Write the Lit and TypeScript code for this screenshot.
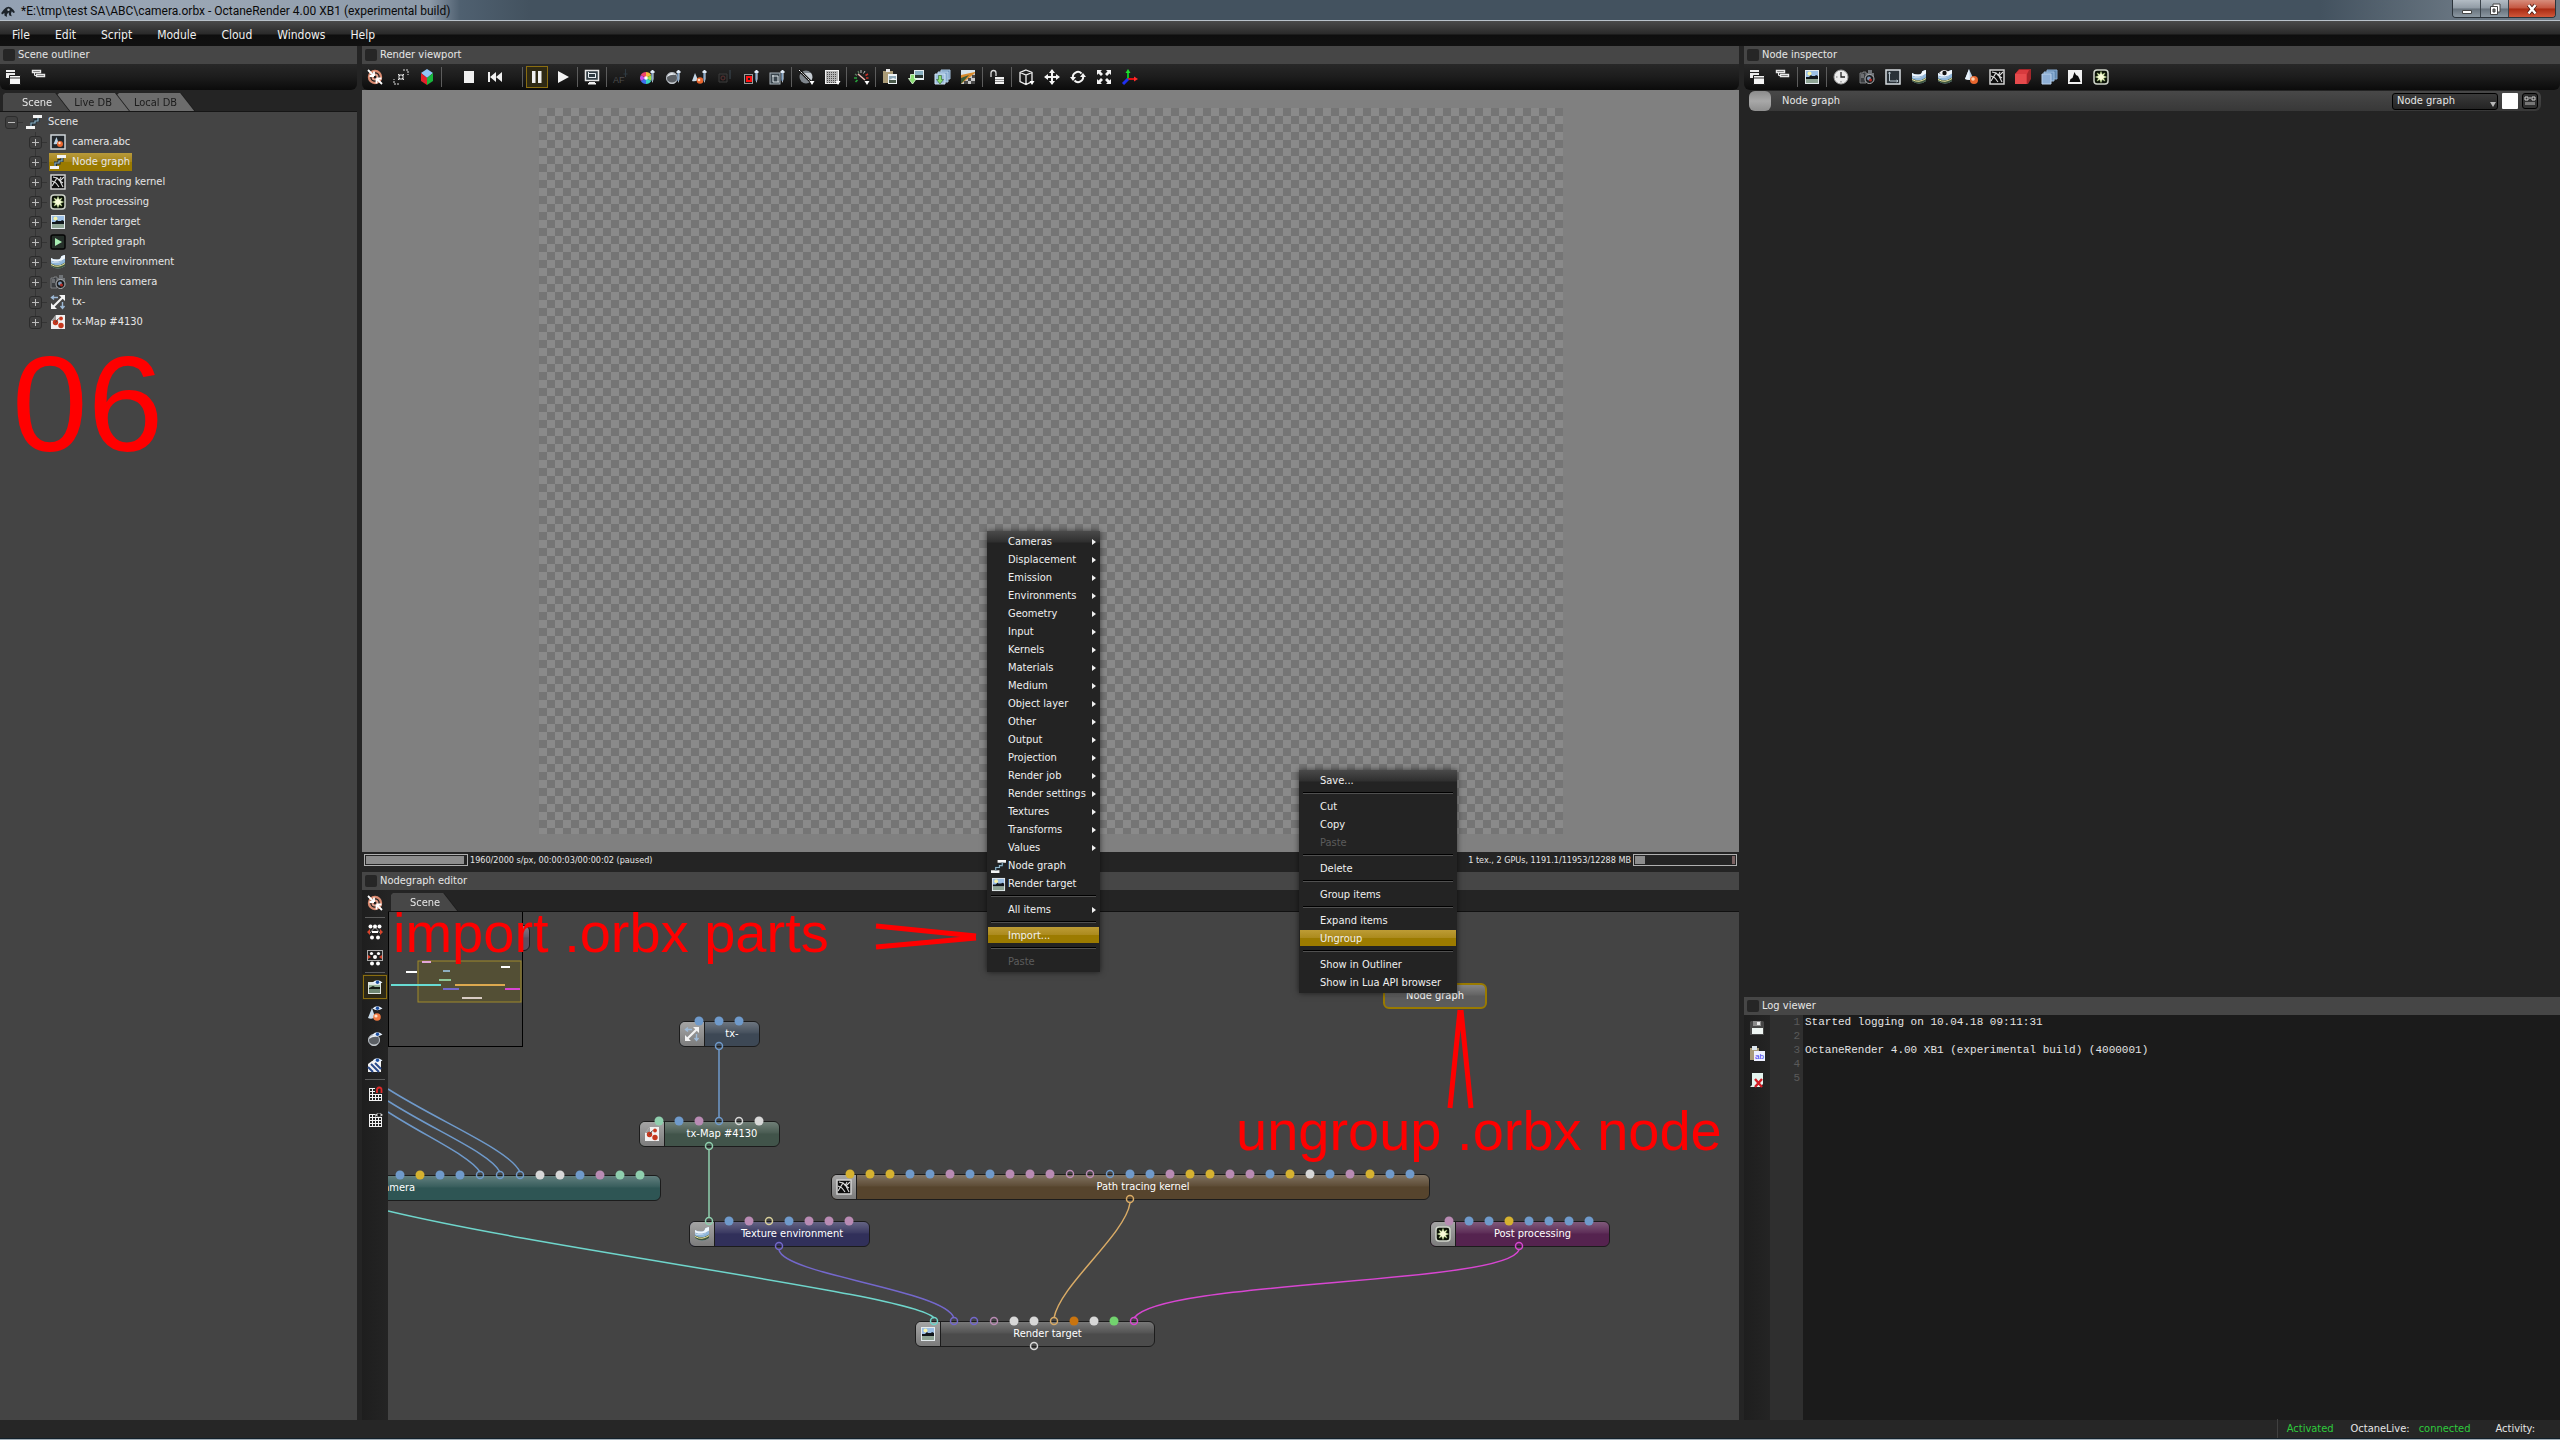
import { LitElement, html, svg, css, nothing, type TemplateResult } from "lit";
import { customElement, property } from "lit/decorators.js";
import { classMap } from "lit/directives/class-map.js";

const pencil = svg`<path d="M12.5 1h2v1h1v2h-1v6l-1 4-1-4V4h-1V2h1z" fill="#dfe9f5"/><path d="M13 4v8" stroke="#3f6d9c" stroke-width="1"/>`;
const dropMark = svg`<path d="M11.500 12h5l-2.500 4z" fill="#fff"/>`;
const eye = svg`<path d="M5.500 3.500Q10 -1 15.500 3.500Q10 7 5.500 3.500z" fill="#e8f2ff"/><circle cx="10.500" cy="3.200" r="1.700" fill="#1d4fa0"/>`;
const globe = svg`<path d="M1 4v8q7 5 14 0V1q-2 0-4 1.500Q11 5 8 5.500 4 6 1 4z" fill="#8fb6da"/><path d="M1 4q3 2 7 1.500Q11 5 11 2.500 13 1 15 1v4q-7 6-14 3z" fill="#f0f7fd"/><path d="M1 9.500q7 4 14-1v3.500q-7 5-14 0z" fill="#40573f"/><path d="M1 10.500q7 4 14-1" stroke="#efe6a0" fill="none"/><path d="M1 7q7 3 14-2" stroke="#7fa6cc" fill="none" stroke-width=".8"/>`;
const thumb = svg`<rect x="1" y="1" width="14" height="14" fill="#e4ebee"/><rect x="2" y="2" width="12" height="7" fill="#9cc0e6"/><circle cx="5.500" cy="4.500" r="2" fill="#f6f3a8"/><path d="M2 8h3l2-2 1 1h3l1-1 2 1v3H2z" fill="#10161c"/><rect x="2" y="10" width="12" height="4" fill="#8fa595"/>`;
const spheres = svg`<path d="M6 0l4 9q-3 3-8 1z" fill="#b9cfe2"/><path d="M6 0l1 11q-3 0-5-1z" fill="#e9f3fb"/><circle cx="11" cy="11" r="4" fill="#e8662e"/><circle cx="10" cy="10" r="1.800" fill="#ffd0b0"/>`;
const target = svg`<circle cx="8" cy="8" r="6" fill="none" stroke="#d98a70" stroke-width="2.400"/><circle cx="8" cy="8" r="2.500" fill="none" stroke="#e0a08c" stroke-width="2"/><path d="M1 1l6 6M7 7V2.500M7 7H2.500" stroke="#fff" stroke-width="1.800"/><path d="M15 15L9.500 9.500M9.500 9.500h5M9.500 9.500v5" stroke="#fff" stroke-width="1.800"/>`;
const sphere = svg`<circle cx="7" cy="9" r="6" fill="#5b5f64"/><circle cx="7" cy="9" r="5.500" fill="none" stroke="#b7bcc2"/><path d="M2 8q1-4 5-4 3 0 4 2-5-1-9 2z" fill="#e5e9ee"/><path d="M3 12q4 3 8 0-1 3-4 3t-4-3z" fill="#c3c8cd"/>`;
const camera = svg`<path d="M1 4h3V3h3v11H1z" fill="#3a3d40" stroke="#8d9093" stroke-width=".8"/><path d="M7 4h2V1h4v3h2v4H7z" fill="#707478"/><path d="M2 6h3M2 8h3" stroke="#a0a3a6"/><circle cx="10.500" cy="10" r="4.500" fill="#1a1c1e" stroke="#b4b7ba"/><circle cx="10" cy="9.500" r="2" fill="#7e96b4"/><circle cx="11.500" cy="11" r="1.500" fill="#b22a22"/>`;
const grid = svg`<path d="M2.500 2v13M5.500 2v13M8.500 2v13M11.500 2v13M14.500 2v13M2 2.500h13M2 5.500h13M2 8.500h13M2 11.500h13M2 14.500h13" stroke="#f2f2f2" fill="none"/>`;

const ICONS: Record<string, TemplateResult> = {
  windows: svg`<path d="M1 1h9v8H1z" fill="#ececec"/><path d="M1 3h9v1H1z" fill="#222"/><path d="M4.500 6.500h11v9h-11z" fill="#f4f4f4" stroke="#1a1a1a"/><path d="M5 9h10" stroke="#333"/>`,
  bars: svg`<path d="M1.500 1.500h8v2h-8zM5.500 5.500h8v2h-8z" fill="none" stroke="#e8e8e8" stroke-width="1.400"/><path d="M3.500 3.500v3h2" fill="none" stroke="#e8e8e8"/>`,
  graph: svg`<path d="M7 1h9v3H7zM0 12h9v3H0z" fill="#f4f4f4"/><path d="M12 4v2.500H9V9H5.500v3" fill="none" stroke="#1d2c36" stroke-width="3"/><path d="M12 4v3H9v2H5v3" fill="none" stroke="#8fb3c6" stroke-width="1.200"/>`,
  abc: svg`<rect x="1" y="1" width="14" height="14" fill="#22272c" stroke="#cfd6da" stroke-width="1.500"/><path d="M6.500 3l2 6q-2 2-5 1z" fill="#bcd3e6"/><circle cx="10" cy="10" r="3" fill="#e8662e"/><circle cx="9.500" cy="9" r="1.200" fill="#ffd9bd"/>`,
  kernel: svg`<rect x="1" y="1" width="14" height="14" fill="#0c0c0c" stroke="#d2d2d2" stroke-width="1.500"/><path d="M2 12l5-8 3 3 4-4M7 4L3 3M10 7l3 6M6 9l3 4M2 7l4 2M11 3l-2 4M13 9l-3-2" stroke="#dcdcdc" stroke-width="1.100" fill="none"/>`,
  post: svg`<rect x="1" y="1" width="14" height="14" rx="3" fill="#0b1206" stroke="#cfd4ca" stroke-width="1.500"/><path d="M8 2.500l1.200 3L12 4l-1.500 2.800 3 1.200-3 1.200L12 12l-2.800-1.500L8 13.500l-1.200-3L4 12l1.500-2.800-3-1.200 3-1.200L4 4l2.800 1.500z" fill="#f8fbd8" stroke="#b9d98a" stroke-width=".5"/>`,
  image: thumb,
  script: svg`<rect x="1" y="1" width="14" height="14" rx="2" fill="#26302a" stroke="#050505" stroke-width="1.500"/><path d="M5 4l7 4-7 4z" fill="#a9efb4"/>`,
  globe,
  globeEye: svg`${globe}<path d="M2 4Q7 -2 13 4Q7 8 2 4z" fill="#f5f5f5"/><circle cx="7.500" cy="4" r="2.200" fill="#111"/>`,
  camera,
  transform: svg`<path d="M3 13L13 3" stroke="#f3f3f3" stroke-width="2.200" fill="none"/><path d="M15 1v6l-6-6zM1 15V9l6 6z" fill="#f3f3f3"/><path d="M2 3.500h6M4 1.500l-2.500 2L4 5.500M12.500 8v6M10.500 12l2 2.500 2-2.500" stroke="#9db9d6" stroke-width="1.400" fill="none"/>`,
  texmap: svg`<path d="M6 1h9v14H1V7z" fill="#f2f2f2"/><path d="M6 1v6H1z" fill="#9c9c9c"/><circle cx="11" cy="4.500" r="1.900" fill="#c6381e"/><circle cx="5.500" cy="8.500" r="2.700" fill="#c6381e"/><path d="M5.500 8.500l3-4" stroke="#444"/><circle cx="11" cy="11.500" r="2.700" fill="#c6381e"/>`,
  target,
  expand: svg`<path d="M10 1h5v5M6 15H1v-5" fill="none" stroke="#ddd" stroke-dasharray="2 1"/><path d="M5 5l2 2M11 5L9 7M5 11l2-2M11 11L9 9M5 7h2V5M11 7H9V5M5 9h2v2M11 9H9v2" stroke="#e8e8e8" fill="none"/>`,
  cube: svg`<path d="M8 0l6 4-6 5-6-5z" fill="#8fc3f5"/><path d="M2 4l6 5v7l-6-4z" fill="#e3202a"/><path d="M14 4L8 9v7l6-4z" fill="#18b63c"/>`,
  stop: svg`<rect x="3" y="2" width="10" height="12" fill="#f0f0f0"/>`,
  rewind: svg`<path d="M1 3h2v10H1zM9 3v10L3 8zM15 3v10L9 8z" fill="#f0f0f0"/>`,
  pause: svg`<path d="M3 2h3.500v12H3zM9 2h3.500v12H9z" fill="#f0f0f0"/>`,
  play: svg`<path d="M3 2l11 6-11 6z" fill="#f4f4f4"/>`,
  monitor: svg`<rect x="1.500" y="1.500" width="13" height="10" fill="#2f3b42" stroke="#e6e6e6" stroke-width="1.500"/><path d="M4 4.500h7.500v4M4.500 3v5.500H12" stroke="#e8eef2" fill="none"/><path d="M5 13h6v1h1v1.500H4V14h1z" fill="#f0f0f0"/>`,
  af: svg`<text x="0" y="14" font-size="9" fill="#4c4c4c">AF</text><path d="M12.500 0v8M10.500 5h4" stroke="#2f3a42"/>`,
  wheel: svg`<path d="M7 9V3a6 6 0 0 1 5.200 3z" fill="#f5b93c"/><path d="M7 9l5.200-3a6 6 0 0 1 0 6z" fill="#9be34a"/><path d="M7 9l5.200 3A6 6 0 0 1 7 15z" fill="#39d6c4"/><path d="M7 9v6a6 6 0 0 1-5.200-3z" fill="#3f6ff0"/><path d="M7 9l-5.200 3a6 6 0 0 1 0-6z" fill="#c552ea"/><path d="M7 9L1.800 6A6 6 0 0 1 7 3z" fill="#f0456a"/><circle cx="7" cy="9" r="1.800" fill="#fff"/>${pencil}`,
  pickSphere: svg`${sphere}${pencil}`,
  pickMat: svg`<path d="M4 4l3 7q-3 2-6 1z" fill="#c3d6e6"/><circle cx="9" cy="11.500" r="3.300" fill="#e8662e"/><circle cx="8" cy="11" r="1.300" fill="#ffd9bd"/>${pencil}`,
  pickDim: svg`<path d="M2 5h8v8H2z" fill="none" stroke="#3d3d3d"/><circle cx="6" cy="9" r="2" fill="none" stroke="#5a3030"/><path d="M13 1v9" stroke="#3c4a55"/>`,
  pickRed: svg`<rect x="1.500" y="5.500" width="8" height="9" fill="#1a1a1a" stroke="#9a9a9a"/><rect x="4" y="8" width="4" height="4" fill="none" stroke="#ff1010" stroke-width="2"/>${pencil}`,
  pickFrame: svg`<rect x="1" y="4" width="10" height="11" fill="#39444c" stroke="#aab4bb"/><path d="M4 6v7h6M3 7h6v6" stroke="#dfe6ea" fill="none"/>${pencil}`,
  split: svg`<circle cx="8" cy="8" r="6.500" fill="#7f868d"/><path d="M3 4l9 9A6.500 6.500 0 0 0 13 4z" fill="#c6ccd2"/><path d="M1 1l14 14" stroke="#111" stroke-width="2.500"/><path d="M1 1l13 13" stroke="#fff" stroke-dasharray="2 1"/>${dropMark}`,
  dither: svg`<rect x="1.500" y="1.500" width="13" height="13" fill="#b5b5b5" stroke="#f2f2f2"/><path d="M3 3.500h10M3 5.500h10M3 7.500h10M3 9.500h10M3 11.500h10M3 13.500h10" stroke="#4d4d4d" stroke-dasharray="1 1"/>${dropMark}`,
  gauge: svg`<path d="M2.500 13l2-2M1 9h3" stroke="#28a33c" stroke-width="1.600"/><path d="M2 5l2 1.500M5 2l1 2.500" stroke="#5f7f63" stroke-width="1.200"/><path d="M8 1v3M12 2l-1.500 2.500" stroke="#bdbdbd"/><path d="M15 5l-2.500 1.500M15.500 9H13" stroke="#c83028" stroke-width="1.600"/><path d="M5 5l7 6" stroke="#f3b9b4" stroke-width="1.600"/>${dropMark}`,
  paste: svg`<path d="M1 2h10v12H1z" fill="#ab9c77"/><path d="M4 0h4v3H4z" fill="#e9e9e9"/><path d="M6 5h9v10H6z" fill="#eef3f5"/><path d="M7 7h7v3l-3-1-4 2z" fill="#8fa9b8"/><path d="M7 11h7v3H7z" fill="#4b5a4b"/>`,
  saveImg: svg`<rect x="6" y="1" width="10" height="10" fill="#e4ebee"/><path d="M7 2h8v4H7z" fill="#86aec0"/><path d="M7 6h8v3H7z" fill="#27342f"/><path d="M2.500 5.500h4v4h2l-4 5.500-4-5.500h2z" fill="#8ade72" stroke="#e3ffe0" stroke-width=".8"/>`,
  saveLayers: svg`<path d="M7 1h9v9H7z" fill="#6e94bb" stroke="#a9c5e0"/><path d="M4 3h10v10H4z" fill="#86abd0" stroke="#b9d2e9"/><path d="M1 5h10v10H1z" fill="#9fbfe0" stroke="#d0e2f3"/><path d="M4.500 6.500h3v4h2L6 15l-3.500-4.500h2z" fill="#8ade72" stroke="#2c5a2c" stroke-width=".6"/>`,
  alpha: svg`<rect x="1" y="1" width="14" height="14" fill="#d8e3ea"/><path d="M1 6l14-3v4L1 15z" fill="#d98a2b"/><path d="M1 9l8-3-8 9z" fill="#3d5a35"/><path d="M1 15L15 4v11z" fill="#c9c9c9"/><path d="M8 9h3v3H8zM11 12h4v3h-4zM12 6h3v3h-3zM4 12h4v3H4z" fill="#4a4a4a"/>`,
  unlock: svg`<path d="M2 8V4q0-2.500 2.500-2.500T7 4v3" fill="none" stroke="#d9d9d9" stroke-width="1.300"/><path d="M6 8h9v7H6z" fill="#f0f0f0"/><path d="M6 10.500h9M6 12.500h9" stroke="#8e8e8e"/>`,
  wireCube: svg`<path d="M8 1l6 2.500v9L8 15.500l-6-3v-9zM2 3.500L8 6l6-2.500M8 6v9" fill="none" stroke="#f0f0f0" stroke-width="1.300"/>${dropMark}`,
  move: svg`<path d="M8 1v14M1 8h14" stroke="#f4f4f4" stroke-width="2"/><path d="M8 0l3 4H5zM8 16l3-4H5zM0 8l4-3v6zM16 8l-4-3v6z" fill="#f4f4f4"/>`,
  rotate: svg`<path d="M3 9a5 5 0 0 1 8.500-4.500M13 7a5 5 0 0 1-8.500 4.500" fill="none" stroke="#f4f4f4" stroke-width="2"/><path d="M0 8h6l-3 4zM10 8h6l-3-4z" fill="#f4f4f4"/>`,
  fit: svg`<path d="M1 1h5L4.500 2.500 7 5 5 7 2.500 4.500 1 6zM15 1v5l-1.500-1.500L11 7 9 5l2.500-2.500L10 1zM1 15v-5l1.500 1.500L5 9l2 2-2.500 2.500L6 15zM15 15h-5l1.500-1.500L9 11l2-2 2.500 2.500L15 10z" fill="#f4f4f4"/>`,
  axes: svg`<path d="M6 10V3" stroke="#10c020" stroke-width="2"/><path d="M6 0l2.500 4h-5z" fill="#20e030"/><path d="M6 10h7" stroke="#e01010" stroke-width="2"/><path d="M16 10l-4-2.500v5z" fill="#ff2a2a"/><path d="M6 10l-5 5" stroke="#2030f0" stroke-width="3"/>`,
  clock: svg`<circle cx="8" cy="8" r="7" fill="#ececec" stroke="#9b9b9b"/><path d="M8 3v5h4" fill="none" stroke="#222" stroke-width="1.300"/><path d="M8 12v1.500M3 8h1.500" stroke="#777"/>`,
  axisBox: svg`<rect x="1" y="1" width="14" height="14" fill="#2a3238" stroke="#d6dce0" stroke-width="1.500"/><path d="M4.500 3v9H13M3.500 4.500l1-1.500 1 1.500M11.500 11l1.500 1-1.500 1" stroke="#b9c6cf" fill="none"/>`,
  spheres,
  redLayers: svg`<path d="M4 0h12v10l-3 5H0V5z" fill="#a3262a"/><path d="M0 5l4-4h10l-2 4v10H0z" fill="#d83a3e"/><path d="M0 5h11v10H0z" fill="#e64a4c"/>`,
  blueLayers: svg`<path d="M6 1h10v9H6z" fill="#5f86ae" stroke="#89abd0"/><path d="M3 3h10v9H3z" fill="#7299c2" stroke="#9dbcdc"/><path d="M1 5h9v10H1z" fill="#8fb0d6" stroke="#b9d0ea"/>`,
  histogram: svg`<rect x="1" y="1" width="14" height="14" fill="#f0f0f0"/><path d="M2.500 13l1-3 2-1 2-6 1.500 3 2 1 1.500 3 1 3z" fill="#0a0a0a"/>`,
  nodesSpread: svg`<path d="M8 3L3 9M8 3l5 6" stroke="#999"/><circle cx="3.500" cy="2.500" r="2" fill="#fff"/><circle cx="8" cy="2.500" r="2" fill="#fff"/><circle cx="12.500" cy="2.500" r="2" fill="#fff"/><path d="M3 5v6L0 8zM13 5v6l3-3z" fill="#d9442c"/><path d="M5 7h6v2H5z" fill="#fff"/><circle cx="5" cy="13.500" r="2" fill="#fff"/><circle cx="11" cy="13.500" r="2" fill="#fff"/>`,
  nodesBox: svg`<rect x=".5" y=".5" width="15" height="10" fill="none" stroke="#aaa"/><circle cx="4.500" cy="3.500" r="1.600" fill="#fff"/><circle cx="11.500" cy="3.500" r="1.600" fill="#fff"/><circle cx="8" cy="7" r="2" fill="#fff"/><path d="M1 5l3 2-3 2zM15 5l-3 2 3 2z" fill="#d9442c"/><circle cx="5" cy="13.500" r="2" fill="#fff"/><circle cx="11" cy="13.500" r="2" fill="#fff"/>`,
  imageEye: svg`<rect x="1" y="3" width="13" height="12" fill="#dfe6e4"/><path d="M2 6h11v4H2z" fill="#96b39b"/><path d="M2 9l4-2 2 1h5v2H2z" fill="#141a14"/><path d="M2 10h11v4H2z" fill="#6f8773"/>${eye}`,
  spheresEye: svg`<path d="M5 3l3 9q-3 3-7 1z" fill="#c8dbe9"/><circle cx="10" cy="12" r="3.800" fill="#ef7a42"/><circle cx="9" cy="11" r="1.600" fill="#ffe0c8"/>${eye}`,
  sphereEye: svg`${sphere}${eye}`,
  stripesEye: svg`<path d="M1 7l4-3h9v11H1z" fill="#f2f2f2"/><path d="M4 7l8 8M8 6l6 6M1 10l5 5" stroke="#2b4a8a" stroke-width="2"/>${eye}`,
  gridMagnet: svg`${grid}<path d="M8 0h8v8H8z" fill="#242424"/><path d="M10 7V4q0-2.500 2.300-2.500T14.500 4v3" fill="none" stroke="#e02a2a" stroke-width="1.800"/>`,
  gridEye: svg`${grid}<path d="M8.500 0h7v5h-7z" fill="#242424"/><path d="M8 3Q12 -1 16 3Q12 6 8 3z" fill="#ddd"/><circle cx="12" cy="3" r="1.700" fill="#111"/>`,
  floppy: svg`<path d="M2 1h12l1 1v13H1V2z" fill="#474747"/><rect x="4" y="1" width="8" height="5" fill="#8a8a8a"/><rect x="8" y="2" width="3" height="3" fill="#e8e8e8"/><rect x="3" y="8" width="11" height="6" fill="#eef5f2"/>`,
  copyText: svg`<path d="M1 2h9v12H1z" fill="#a89a78"/><rect x="3" y="0" width="5" height="4" fill="#dce6ee"/><rect x="5" y="5" width="11" height="10" fill="#eef0ff"/><text x="6" y="13" font-size="8" fill="#3a3af0">ab</text>`,
  clearLog: svg`<path d="M3 1h11v11l-3 3H1l2-2z" fill="#e3f3ee"/><path d="M6 7l7 8M13 7l-7 8" stroke="#d01c24" stroke-width="2.400"/>`,
};

const icon = (name: string) =>
  html`<svg class="icon" viewBox="0 0 16 16" aria-hidden="true">${ICONS[name]}</svg>`;

type Tool = { icon: string; label: string; on?: boolean } | "|" | " ";

const tool = (i: string, label: string, on = false): Tool => ({ icon: i, label, on });

const renderTools = (tools: Tool[]) =>
  tools.map((t) =>
    t === "|"
      ? html`<span class="sep"></span>`
      : t === " "
        ? html`<span class="space"></span>`
        : html`<button class=${classMap({ tool: true, on: !!t.on })} aria-label=${t.label}>${icon(t.icon)}</button>`
  );

const OUTLINER_TOOLS: Tool[] = [tool("windows", "Expand all"), tool("bars", "Collapse all")];

const VIEWPORT_TOOLS: Tool[] = [
  tool("target", "Recenter view"), tool("expand", "Reset view"), tool("cube", "Display mode"), "|", " ",
  tool("stop", "Stop"), tool("rewind", "Restart"), " ", "|",
  tool("pause", "Pause", true), tool("play", "Render"), "|",
  tool("monitor", "Real time"), "|",
  tool("af", "Auto focus picker"), tool("wheel", "White balance picker"), tool("pickSphere", "Material picker"),
  tool("pickMat", "Object picker"), tool("pickDim", "Camera target picker"), tool("pickRed", "Render region"),
  tool("pickFrame", "Film region"), "|",
  tool("split", "Clay mode"), tool("dither", "Subsampling"), "|",
  tool("gauge", "Render priority"), "|",
  tool("paste", "Copy image"), tool("saveImg", "Save image"), tool("saveLayers", "Save passes"), tool("alpha", "Background image"), "|",
  tool("unlock", "Lock resolution"), "|",
  tool("wireCube", "Camera views"), tool("move", "Move"), tool("rotate", "Rotate"), tool("fit", "Scale"), tool("axes", "World axes"),
];

const INSPECTOR_TOOLS: Tool[] = [
  tool("windows", "Expand all"), tool("bars", "Collapse all"), "|",
  tool("image", "Render target"), "|",
  tool("clock", "Animation"), tool("camera", "Camera"), tool("axisBox", "Resolution"), tool("globe", "Environment"),
  tool("globeEye", "Visible environment"), tool("spheres", "Geometry"), tool("kernel", "Kernel"), tool("redLayers", "Render layer"),
  tool("blueLayers", "Render passes"), tool("histogram", "Imager"), tool("post", "Post processing"),
];

const GRAPH_TOOLS: Tool[] = [
  tool("target", "Recenter graph"), "|", tool("nodesSpread", "Unfold items"), tool("nodesBox", "Unfold groups"), "|",
  tool("imageEye", "Render target preview", true), tool("spheresEye", "Mesh preview"), tool("sphereEye", "Material preview"),
  tool("stripesEye", "Texture preview"), "|", tool("gridMagnet", "Snap to grid"), tool("gridEye", "Show grid"),
];

const LOG_TOOLS: Tool[] = [tool("floppy", "Save log"), tool("copyText", "Copy log"), tool("clearLog", "Clear log")];

const TREE = [
  ["abc", "camera.abc"], ["graph", "Node graph"], ["kernel", "Path tracing kernel"], ["post", "Post processing"],
  ["image", "Render target"], ["script", "Scripted graph"], ["globe", "Texture environment"],
  ["camera", "Thin lens camera"], ["transform", "tx-"], ["texmap", "tx-Map #4130"],
];

interface MenuEntry { label: string; sub?: boolean; icon?: string; active?: boolean; off?: boolean }

const CREATE_MENU: (MenuEntry | null)[] = [
  ...["Cameras", "Displacement", "Emission", "Environments", "Geometry", "Input", "Kernels", "Materials", "Medium",
    "Object layer", "Other", "Output", "Projection", "Render job", "Render settings", "Textures", "Transforms", "Values",
  ].map((label) => ({ label, sub: true })),
  { label: "Node graph", icon: "graph" }, { label: "Render target", icon: "image" }, null,
  { label: "All items", sub: true }, null, { label: "Import...", active: true }, null, { label: "Paste", off: true },
];

const NODE_MENU: (MenuEntry | null)[] = [
  { label: "Save..." }, null, { label: "Cut" }, { label: "Copy" }, { label: "Paste", off: true }, null,
  { label: "Delete" }, null, { label: "Group items" }, null, { label: "Expand items" }, { label: "Ungroup", active: true },
  null, { label: "Show in Outliner" }, { label: "Show in Lua API browser" },
];

const PIN: Record<string, string> = {
  y: "#d6b22f", b: "#6f9acb", p: "#b98bb4", w: "#d8d8d8", g: "#8fcfae", t: "#6fd6cc", v: "#7468cc",
  o: "#d9ab66", d: "#c9740f", n: "#72d36e", m: "#d846d2", c: "#d8cf9a",
};

interface GraphNode {
  x: number; y: number; w: number; label: string; icon?: string; tone: string;
  pins: string; start: number; out?: [number, string];
}

// Coordinates are canvas units; an upper-case pin code marks a connected (hollow) pin.
const NODES: GraphNode[] = [
  { x: 291, y: 109, w: 81, label: "tx-", icon: "transform", tone: "slate", pins: "bbb", start: 311, out: [331, "b"] },
  { x: 251, y: 209, w: 141, label: "tx-Map #4130", icon: "texmap", tone: "green", pins: "gbpBWw", start: 271, out: [321, "g"] },
  { x: -304, y: 263, w: 577, label: "Thin lens camera", tone: "teal", pins: "bybbBBBwwbpgg", start: 12 },
  { x: 301, y: 309, w: 181, label: "Texture environment", icon: "globe", tone: "navy", pins: "GbpCbppp", start: 321, out: [391, "v"] },
  { x: 443, y: 262, w: 599, label: "Path tracing kernel", icon: "kernel", tone: "brown", pins: "yyybbpbbpppPPBbbpyyppbywbpybb", start: 462, out: [742, "o"] },
  { x: 1042, y: 309, w: 180, label: "Post processing", icon: "post", tone: "purple", pins: "pbbybbbb", start: 1061, out: [1131, "m"] },
  { x: 527, y: 409, w: 240, label: "Render target", icon: "image", tone: "gray", pins: "TVVPwwOdwnM", start: 546, out: [646, "w"] },
  { x: 995, y: 71, w: 104, label: "Node graph", tone: "picked", pins: "", start: 0 },
  { x: 30, y: 13, w: 112, label: "", tone: "mauve", pins: "", start: 0 },
];

const WIRES: [string, string][] = [
  ["b", "M331 138V205"], ["g", "M321 238V305"],
  ["b", "M0 177C52 210 122 238 132 260"], ["b", "M0 189C47 219 102 241 112 260"], ["b", "M0 200C37 224 82 244 92 260"],
  ["t", "M0 299C172 340 527 383 546 406"], ["v", "M391 338C397 363 557 378 566 406"],
  ["o", "M742 291C737 323 672 373 666 406"], ["m", "M1131 338C1117 373 772 368 746 406"],
];

const MINIMAP: [number, number, number, string][] = [
  [34, 50, 9, "#e3a6d8"], [18, 60, 11, "#ffffff"], [55, 59, 7, "#8faec0"], [113, 55, 9, "#ffffff"], [51, 68, 12, "#8fc79a"],
  [3, 73, 50, "#68dcd4"], [67, 73, 50, "#dca94f"], [55, 77, 16, "#7468cc"], [117, 77, 15, "#d846d2"], [74, 86, 20, "#d8ccc4"],
];

const shared = css`
  button, select { font: inherit; color: inherit; margin: 0; padding: 0; border: 0; background: none; }
  .icon { width: 16px; height: 16px; flex: none; display: block; overflow: visible; font-family: "Liberation Sans", sans-serif; }
`;

@customElement("context-menu")
export class ContextMenu extends LitElement {
  @property({ attribute: false }) entries: (MenuEntry | null)[] = [];

  static styles = [shared, css`
    :host { display: block; color: #f0f0f0; box-shadow: 0 0 6px rgba(0, 0, 0, 0.6); }
    .menu {
      list-style: none; margin: 0; padding: 1px 1px 2px;
      background: linear-gradient(#4a4a4a, #2f2f2f 11px, #232323 12px);
    }
    .item { display: flex; align-items: center; box-sizing: border-box; width: 100%; height: 18px; text-align: left; padding: 2px 3px 0 20px; white-space: nowrap; }
    .icon { width: 15px; height: 15px; margin: 0 2px 0 -17px; }
    .label { flex: 1; }
    .active { background: linear-gradient(#bd9c35, #ab8a1d 50%, #9c7b00 52%) 0 1px / 100% 16px no-repeat; }
    .off { color: #5c5c5c; }
    .arrow { border: 3px solid transparent; border-left: 4px solid #f0f0f0; border-right: 0; }
    .rule { height: 1px; margin: 3px 3px; background: #000; border-bottom: 1px solid #505050; }
  `];

  render() {
    return html`<ul class="menu" role="menu">
      ${this.entries.map((e) => e === null
        ? html`<li class="rule" role="separator"></li>`
        : html`<li role="none"><button role="menuitem" ?disabled=${e.off}
            class=${classMap({ item: true, active: !!e.active, off: !!e.off })}>
            ${e.icon ? icon(e.icon) : nothing}<span class="label">${e.label}</span>
            ${e.sub ? html`<span class="arrow"></span>` : nothing}</button></li>`)}
    </ul>`;
  }
}

@customElement("node-canvas")
export class NodeCanvas extends LitElement {
  static styles = [shared, css`
    :host { display: block; position: relative; overflow: hidden; background: #444; border-top: 1px solid #111; box-sizing: border-box; color: #fff; }
    .node {
      position: absolute; box-sizing: border-box; height: 26px; display: flex; align-items: stretch;
      border: 1px solid #1c1c1c; border-radius: 6px; overflow: hidden;
      background: linear-gradient(rgba(255, 255, 255, 0.25), rgba(255, 255, 255, 0.05) 45%, rgba(255, 255, 255, 0) 50%), var(--tone);
    }
    .badge { flex: none; width: 25px; display: grid; place-items: center; background: linear-gradient(#a5a5a5, #7c7c7c); border-right: 1px solid #1c1c1c; box-sizing: border-box; }
    .name { flex: 1; text-align: center; line-height: 24px; white-space: nowrap; }
    .slate { --tone: #3d4855; } .green { --tone: #41544a; } .teal { --tone: #2e5554; } .navy { --tone: #31305a; }
    .brown { --tone: #56442d; } .purple { --tone: #55234f; } .gray { --tone: #4b4b4b; } .mauve { --tone: #5f4f60; }
    .picked { --tone: #5c5c5c; border: 2px solid #997a00; }
    .picked .name { line-height: 22px; }
    .wires { position: absolute; inset: 0; width: 100%; height: 100%; }
    .map { position: absolute; top: 0; left: 0; width: 133px; height: 134px; border: 1px solid #000; border-top: 0; background: #444; }
    .map svg { display: block; width: 100%; height: 100%; overflow: visible; }
  `];

  private node(n: GraphNode) {
    return html`<div class="node ${n.tone}" style="left:${n.x}px;top:${n.y}px;width:${n.w}px">
      ${n.icon ? html`<span class="badge">${icon(n.icon)}</span>` : nothing}<span class="name">${n.label}</span></div>`;
  }

  private pin(x: number, y: number, code: string, hollow: boolean) {
    const color = PIN[code.toLowerCase()];
    return hollow
      ? svg`<circle cx=${x} cy=${y} r="3.500" fill="none" stroke=${color} stroke-width="1.500"/>`
      : svg`<circle cx=${x} cy=${y} r="4.500" fill=${color}/>`;
  }

  render() {
    return html`
      ${NODES.map((n) => this.node(n))}
      <svg class="wires" aria-hidden="true">
        ${WIRES.map(([c, d]) => svg`<path d=${d} fill="none" stroke=${PIN[c]} stroke-width="1.500"/>`)}
        ${NODES.map((n) => [...n.pins].map((c, i) => this.pin(n.start + i * 20, n.y, c, c < "a")))}
        ${NODES.map((n) => (n.out ? this.pin(n.out[0], n.y + 25, n.out[1], true) : nothing))}
      </svg>
      <div class="map"><svg aria-hidden="true">
        <rect x="29" y="49" width="103" height="41" fill="rgba(120,105,20,.3)" stroke="#a08a2a"/>
        ${MINIMAP.map(([x, y, w, c]) => svg`<rect x=${x - 1} y=${y - 1} width=${w} height="2" fill=${c}/>`)}
      </svg></div>`;
  }
}

@customElement("app-root")
export class AppRoot extends LitElement {
  static styles = [shared, css`
    :host {
      display: flex; flex-direction: column; position: relative; min-height: 100vh; overflow: hidden;
      background: #242424; color: #e6e6e6;
      font-family: "DejaVu Sans Condensed", "Noto Sans", sans-serif; font-size: 11px; line-height: 14px;
    }
    .titlebar {
      display: flex; align-items: center; height: 20px; gap: 6px; padding-left: 2px; border-bottom: 1px solid #b9c2ca; color: #0a0a0a;
      background: linear-gradient(90deg, #93a1b3, #9aa6b4 220px, #8c99a8 430px, #4f6070 460px, #43525f 530px, #43525f calc(100% - 240px), #66737f calc(100% - 110px), #6d7a86);
      font-family: Roboto, "Noto Sans", sans-serif; font-size: 12px;
    }
    .titlebar .icon { width: 13px; height: 13px; }
    .title { flex: 1; margin: 0; padding-top: 2px; font: inherit; white-space: nowrap; }
    .window-buttons { align-self: flex-start; display: flex; margin-right: 4px; border: 1px solid #2b333a; border-top: 0; border-radius: 0 0 4px 4px; overflow: hidden; }
    .wb { width: 28px; height: 17px; display: grid; place-items: center; background: linear-gradient(#b3bcc4, #8f9aa4 48%, #66717b 52%, #8c98a2); border-right: 1px solid #3a434b; }
    .wb.close { width: 46px; background: linear-gradient(#d78d7c, #c4553f 48%, #a92a12 52%, #d0573a); border-right: 0; }
    .wb svg { width: 12px; height: 12px; }
    .menubar { display: flex; gap: 1px; height: 25px; background: linear-gradient(#4a4a4a, #2a2a2a 13px, #0e0e0e 14px, #111); font-size: 12px; color: #f0f0f0; }
    .menubar button { padding: 3px 12px 0; }
    .workspace { flex: 1; min-height: 0; display: grid; grid-template-columns: minmax(0, 357fr) minmax(0, 1377fr) minmax(0, 816fr); gap: 5px; }
    .column { display: grid; min-height: 0; min-width: 0; }
    .middle { grid-template-rows: minmax(0, 826fr) minmax(0, 548fr); }
    .right { grid-template-rows: minmax(0, 951fr) minmax(0, 423fr); }
    .panel { display: flex; flex-direction: column; min-height: 0; min-width: 0; }
    .head { display: flex; align-items: center; gap: 3px; height: 18px; padding-left: 3px; background: #464646; }
    .head h2 { margin: 0; font: inherit; }
    .grip { width: 12px; height: 12px; border-radius: 2px; background: #262626; }
    .tools { display: flex; height: 26px; background: linear-gradient(#282828, #1c1c1c 50%, #0b0b0b); border-radius: 0 0 6px 6px; }
    .tool { width: 26px; height: 26px; display: grid; place-items: center; box-sizing: border-box; }
    .tools .tool.on { border: 2px solid transparent; background: linear-gradient(#2f2a14, #2f2a14) content-box; outline: 1px solid #8a6d10; outline-offset: -3px; }
    .sep { width: 1px; margin: 3px 1px; background: #5c5c5c; }
    .space { width: 13px; }
    .tabs { display: flex; align-items: flex-end; height: 21px; padding-left: 3px; border-bottom: 1px solid #161616; background: #242424; }
    .tab { position: relative; height: 18px; filter: drop-shadow(1px 0 #1c1c1c); }
    .tab + .tab { margin-left: -12px; color: #1c1c1c; }
    .tab:nth-child(1) { z-index: 3; }
    .tab:nth-child(2) { z-index: 2; }
    .tab span { display: block; height: 18px; line-height: 20px; padding: 0 17px 0 19px; background: #474747; clip-path: polygon(2px 0, calc(100% - 14px) 0, 100% 100%, 0 100%, 0 2px); }
    .tab + .tab span { padding-left: 17px; background: #6c6c6c; }
    .outline { flex: 1; background: #444; }
    .tree, .tree ul { list-style: none; margin: 0; padding: 0; }
    .tree ul { padding-left: 24px; position: relative; }
    .tree ul::before { content: ""; position: absolute; left: 35px; top: 0; bottom: 10px; border-left: 1px solid #343434; }
    .row { display: flex; align-items: center; height: 20px; padding-left: 5px; gap: 6px; position: relative; }
    .row::before { content: ""; position: absolute; left: 18px; top: 10px; width: 5px; border-top: 1px solid #343434; }
    .twist { width: 13px; height: 13px; display: grid; place-items: center; border: 1px solid #2c2c2c; border-radius: 3px; background: #404040; color: #bdbdbd; box-sizing: border-box; position: relative; z-index: 1; }
    .twist svg { width: 7px; height: 7px; display: block; }
    .entry { display: flex; align-items: center; gap: 6px; height: 18px; padding: 0 2px 0 1px; margin-left: 1px; white-space: nowrap; }
    .entry.chosen { background: linear-gradient(#b89a3c, #a58418 50%, #9a7a00 52%); }
    .view { flex: 1; display: grid; place-items: center; background: #808080; min-height: 0; }
    .render { width: 1024px; max-width: 100%; height: 726px; max-height: 100%; background: repeating-conic-gradient(#757575 0 25%, #8a8a8a 0 50%) 0 0 / 16px 16px; }
    .stats { display: flex; align-items: flex-start; gap: 2px; height: 18px; padding: 2px 2px 0; font-size: 9px; line-height: 12px; }
    .stats .grow { flex: 1; }
    .meter { box-sizing: border-box; width: 104px; height: 12px; padding: 1px; border: 1px solid #b0b0b0; display: flex; justify-content: space-between; }
    .fill { background: #8d8d8d; }
    .reserve { width: 3px; background: #7a6262; }
    .editor { flex: 1; display: flex; min-height: 0; }
    .vtools { width: 26px; flex: none; display: flex; flex-direction: column; background: linear-gradient(90deg, #1e1e1e, #242424); }
    .vtools .tool { height: 26px; }
    .vtools .sep { width: auto; height: 1px; margin: 1px 3px; flex: none; }
    .vtools .tool.on { outline: 1px solid #8a6d10; outline-offset: -2px; background: #2c2817; }
    .stack { flex: 1; display: flex; flex-direction: column; min-width: 0; }
    .stack .tabs { height: 21px; border: 0; }
    node-canvas { flex: 1; }
    .noderow { display: flex; align-items: center; height: 20px; margin: 1px 19px 0 5px; gap: 4px; border-radius: 6px; background: linear-gradient(#484848, #383838); padding-right: 3px; box-sizing: border-box; }
    .swatch { width: 22px; height: 20px; border-radius: 6px; background: linear-gradient(#8c8c8c, #a8a8a8 50%, #8e8e8e); margin-right: 7px; }
    .noderow h3 { flex: 1; margin: 0; font: inherit; }
    .noderow select { width: 106px; height: 17px; padding: 0 4px; border: 1px solid #000; border-radius: 3px; appearance: none; background: linear-gradient(#3a3a3a, #242424); }
    .pick { position: relative; display: flex; }
    .pick::after { content: ""; position: absolute; right: 2px; bottom: 3px; border: 3px solid transparent; border-top: 5px solid #b8b8b8; border-bottom: 0; }
    .white { width: 16px; height: 16px; background: #fff; border-radius: 1px; }
    .link { width: 16px; height: 16px; border: 1px solid #000; border-radius: 3px; background: #303030; display: grid; place-items: center; }
    .link svg { width: 12px; height: 12px; }
    .log { flex: 1; display: flex; min-height: 0; background: #1b1b1b; }
    .lines { flex: 1; margin: 0; padding: 0; list-style: none; font: 11px/14px "Liberation Mono", monospace; counter-reset: n; background: linear-gradient(90deg, #2f2f2f 33px, #1b1b1b 33px); color: #e4e4e4; }
    .lines li { display: flex; gap: 5px; height: 14px; white-space: pre; counter-increment: n; }
    .lines li::before { content: counter(n); width: 30px; text-align: right; color: #5a5a5a; }
    .status { display: flex; justify-content: flex-end; align-items: center; height: 18px; background: #262626; padding-right: 25px; line-height: 20px; }
    .status > * { white-space: nowrap; }
    .ok { color: #2ecb3c; }
    .activated { padding-left: 9px; margin-right: 17px; border-left: 1px solid #404040; }
    .connected { margin: 0 25px 0 9px; }
    .edge { height: 2px; background: linear-gradient(#12202a 50%, #a3afb8 50%); }
    context-menu { position: absolute; }
    .create { left: 987px; top: 531px; width: 113px; }
    .nodemenu { left: 1299px; top: 770px; width: 158px; }
    .notes { position: absolute; inset: 0; pointer-events: none; color: #f00; font-family: "Liberation Sans", Arial, sans-serif; }
    .notes p { position: absolute; margin: 0; white-space: nowrap; font-size: 56px; line-height: 48px; }
    .notes svg { position: absolute; inset: 0; width: 100%; height: 100%; }
    .notes .step { left: 12px; top: 346px; font-size: 136px; line-height: 116px; }
    .notes .import { left: 393px; top: 909px; }
    .notes .ungroup { left: 1236px; top: 1107px; }
  `];

  private head(title: string) {
    return html`<header class="head"><span class="grip"></span><h2>${title}</h2></header>`;
  }

  private twist(open: boolean) {
    return html`<button class="twist" aria-label=${open ? "Collapse" : "Expand"}><svg viewBox="0 0 7 7">
      <path d=${open ? "M0 3.500h7" : "M0 3.500h7M3.500 0v7"} stroke="currentColor"/></svg></button>`;
  }

  render() {
    return html`
      <header class="titlebar">
        <svg class="icon" viewBox="0 0 16 16"><path d="M2 7q6-7 12 0l2 3-2 1-2-2-1 3 1 3-3-1-1-4-2 3 0 3-3-2 0-3-3 2-1-2z" fill="#1d242b"/><circle cx="8" cy="7" r="1.500" fill="#aab3bc"/></svg>
        <h1 class="title">*E:\\tmp\\test SA\\ABC\\camera.orbx - OctaneRender 4.00 XB1 (experimental build)</h1>
        <div class="window-buttons">
          <button class="wb" aria-label="Minimize"><svg viewBox="0 0 12 12"><path d="M1.500 7.500h9v3h-9z" fill="#fff" stroke="#444"/></svg></button>
          <button class="wb" aria-label="Restore"><svg viewBox="0 0 12 12"><path d="M4 1h7v8H4z" fill="#fff" stroke="#444"/><path d="M1.500 3.500h7v8h-7z" fill="#fff" stroke="#444"/><path d="M4 6h2v3H4z" fill="#777" stroke="#444"/></svg></button>
          <button class="wb close" aria-label="Close"><svg viewBox="0 0 12 12"><path d="M2.500 2l7 8.500M9.500 2l-7 8.500" stroke="#4a1a12" stroke-width="4"/><path d="M2.500 2l7 8.500M9.500 2l-7 8.500" stroke="#fff" stroke-width="2.400"/></svg></button>
        </div>
      </header>
      <nav class="menubar">
        ${["File", "Edit", "Script", "Module", "Cloud", "Windows", "Help"].map((m) => html`<button>${m}</button>`)}
      </nav>
      <main class="workspace">
        <section class="panel">
          ${this.head("Scene outliner")}
          <div class="tools">${renderTools(OUTLINER_TOOLS)}</div>
          <div class="tabs">
            ${["Scene", "Live DB", "Local DB"].map((t) => html`<button class="tab"><span>${t}</span></button>`)}
          </div>
          <div class="outline">
            <ul class="tree"><li>
              <div class="row">${this.twist(true)}<span class="entry">${icon("graph")}Scene</span></div>
              <ul>${TREE.map(([i, label]) => html`<li class="row">${this.twist(false)}
                <span class=${classMap({ entry: true, chosen: label === "Node graph" })}>${icon(i)}${label}</span></li>`)}</ul>
            </li></ul>
          </div>
        </section>

        <div class="column middle">
          <section class="panel">
            ${this.head("Render viewport")}
            <div class="tools">${renderTools(VIEWPORT_TOOLS)}</div>
            <div class="view"><div class="render"></div></div>
            <div class="stats">
              <div class="meter"><span class="fill" style="width:98%"></span></div>
              <span class="grow">1960/2000 s/px, 00:00:03/00:00:02 (paused)</span>
              <span>1 tex., 2 GPUs, 1191.1/11953/12288 MB</span>
              <div class="meter"><span class="fill" style="width:10%"></span><span class="reserve"></span></div>
            </div>
          </section>
          <section class="panel">
            ${this.head("Nodegraph editor")}
            <div class="editor">
              <div class="vtools">${renderTools(GRAPH_TOOLS)}</div>
              <div class="stack">
                <div class="tabs"><button class="tab"><span>Scene</span></button></div>
                <node-canvas></node-canvas>
              </div>
            </div>
          </section>
        </div>

        <div class="column right">
          <section class="panel">
            ${this.head("Node inspector")}
            <div class="tools">${renderTools(INSPECTOR_TOOLS)}</div>
            <div class="noderow">
              <span class="swatch"></span><h3>Node graph</h3>
              <span class="pick"><select aria-label="Item type"><option>Node graph</option></select></span>
              <button class="white" aria-label="Item colour"></button>
              <button class="link" aria-label="Item help"><svg viewBox="0 0 12 12"><path d="M1 2h3v3H1zM8 2h3v3H8zM5 3h2" fill="none" stroke="#d0d0d0"/><path d="M1 7h10v3H1z" fill="#777"/></svg></button>
            </div>
          </section>
          <section class="panel">
            ${this.head("Log viewer")}
            <div class="log">
              <div class="vtools">${renderTools(LOG_TOOLS)}</div>
              <ol class="lines">
                ${["Started logging on 10.04.18 09:11:31", "", "OctaneRender 4.00 XB1 (experimental build) (4000001)", "", ""].map((l) => html`<li>${l}</li>`)}
              </ol>
            </div>
          </section>
        </div>
      </main>
      <footer class="status">
        <span class="ok activated">Activated</span><span>OctaneLive:</span><span class="ok connected">connected</span><span>Activity:</span>
      </footer>
      <div class="edge"></div>

      <context-menu class="create" .entries=${CREATE_MENU}></context-menu>
      <context-menu class="nodemenu" .entries=${NODE_MENU}></context-menu>

      <div class="notes">
        <p class="step">06</p>
        <p class="import">import .orbx parts</p>
        <p class="ungroup">ungroup .orbx node</p>
        <svg aria-hidden="true"><path d="M876 926L976 936M876 947L976 938M1460 1010L1450 1108M1461 1010L1471 1108" stroke="#f00" stroke-width="5" fill="none"/></svg>
      </div>`;
  }
}
